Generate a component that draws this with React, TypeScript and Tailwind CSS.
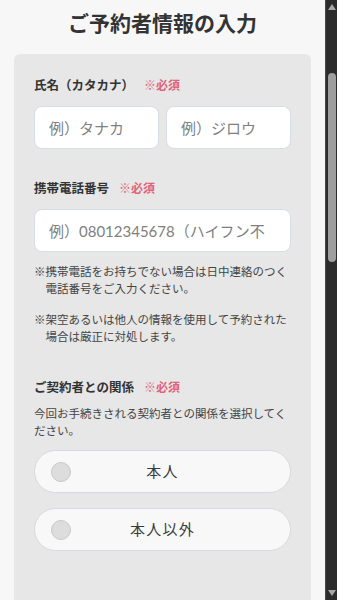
// 予約者情報フォーム（ステップ2）。右端はブラウザのスクロールバー（ダーク）を再現。

const font = "font-['Noto_Sans_CJK_JP','Noto_Sans',sans-serif]";

function Label({ text, required = true }: { text: string; required?: boolean }) {
  return (
    <div className="flex items-center gap-[10px] text-[12.5px] leading-[18px] font-bold text-[#333]">
      <span>{text}</span>
      {required && <span className="text-[12px] text-[#e0627a]">※必須</span>}
    </div>
  );
}

function TextInput({ placeholder, className = "" }: { placeholder: string; className?: string }) {
  return (
    <input
      type="text"
      placeholder={placeholder}
      className={`h-[43px] min-w-0 rounded-[8px] border border-[#d8dde3] bg-white pr-[25px] pl-[14px] font-['Lato','Noto_Sans_CJK_JP',sans-serif] text-[15px] text-[#333] outline-none placeholder:text-[#808080] ${className}`}
    />
  );
}

function Note({ children }: { children: React.ReactNode }) {
  return (
    <p className="pl-[1em] indent-[-1em] text-[11.5px] leading-[17px] text-[#444]">{children}</p>
  );
}

function RadioPill({ label }: { label: string }) {
  return (
    <label className="grid h-[43px] grid-cols-[36px_1fr_36px] items-center rounded-full border border-[#d6dadf] bg-[#f8f8f8]">
      <span className="ml-4 h-5 w-5 rounded-full border border-[#c8c8c8] bg-[#dddddd]" />
      <span className="text-center text-[15px] tracking-[0.08em] text-[#3a3a3a]">{label}</span>
      <span />
    </label>
  );
}

function ScrollBar() {
  return (
    <div className="flex w-[12px] shrink-0 flex-col items-center border-l border-[#4a4a4a] bg-[#2c2c2c]">
      <svg viewBox="0 0 8 6" className="mt-[4px] h-[6px] w-[8px] fill-[#a8a8a8]">
        <path d="M4 0 8 6H0z" />
      </svg>
      <div className="mt-[63px] h-[189px] w-[8px] rounded-full bg-[#9e9e9e]" />
      <div className="flex-1" />
      <svg viewBox="0 0 8 6" className="mb-[4px] h-[6px] w-[8px] fill-[#a8a8a8]">
        <path d="M0 0h8L4 6z" />
      </svg>
    </div>
  );
}

export default function App() {
  return (
    <div className={`flex h-screen overflow-hidden bg-[#f7f7f7] ${font}`}>
      <main className="min-w-0 flex-1">
        <h1 className="pt-[7px] text-center text-[21px] leading-[30px] font-bold text-[#333]">
          ご予約者情報の入力
        </h1>

        <section className="mx-[14px] mt-[17px] rounded-[6px] bg-[#e7e7e7] px-5 pt-[22px] pb-24">
          <Label text="氏名（カタカナ）" />
          <div className="mt-3 grid grid-cols-2 gap-[7px]">
            <TextInput placeholder="例）タナカ" />
            <TextInput placeholder="例）ジロウ" />
          </div>

          <div className="mt-[30px]">
            <Label text="携帯電話番号" />
          </div>
          <TextInput placeholder="例）08012345678（ハイフン不要）" className="mt-3 w-full" />
          <div className="mt-[11px] flex flex-col gap-[14px]">
            <Note>※携帯電話をお持ちでない場合は日中連絡のつく電話番号をご入力ください。</Note>
            <Note>※架空あるいは他人の情報を使用して予約された場合は厳正に対処します。</Note>
          </div>

          <div className="mt-[33px]">
            <Label text="ご契約者との関係" />
          </div>
          <p className="mt-[9px] text-[11.5px] leading-[17px] text-[#444]">
            今回お手続きされる契約者との関係を選択してください。
          </p>
          <div className="mt-[11px] flex flex-col gap-[15px]">
            <RadioPill label="本人" />
            <RadioPill label="本人以外" />
          </div>
        </section>
      </main>
      <ScrollBar />
    </div>
  );
}
